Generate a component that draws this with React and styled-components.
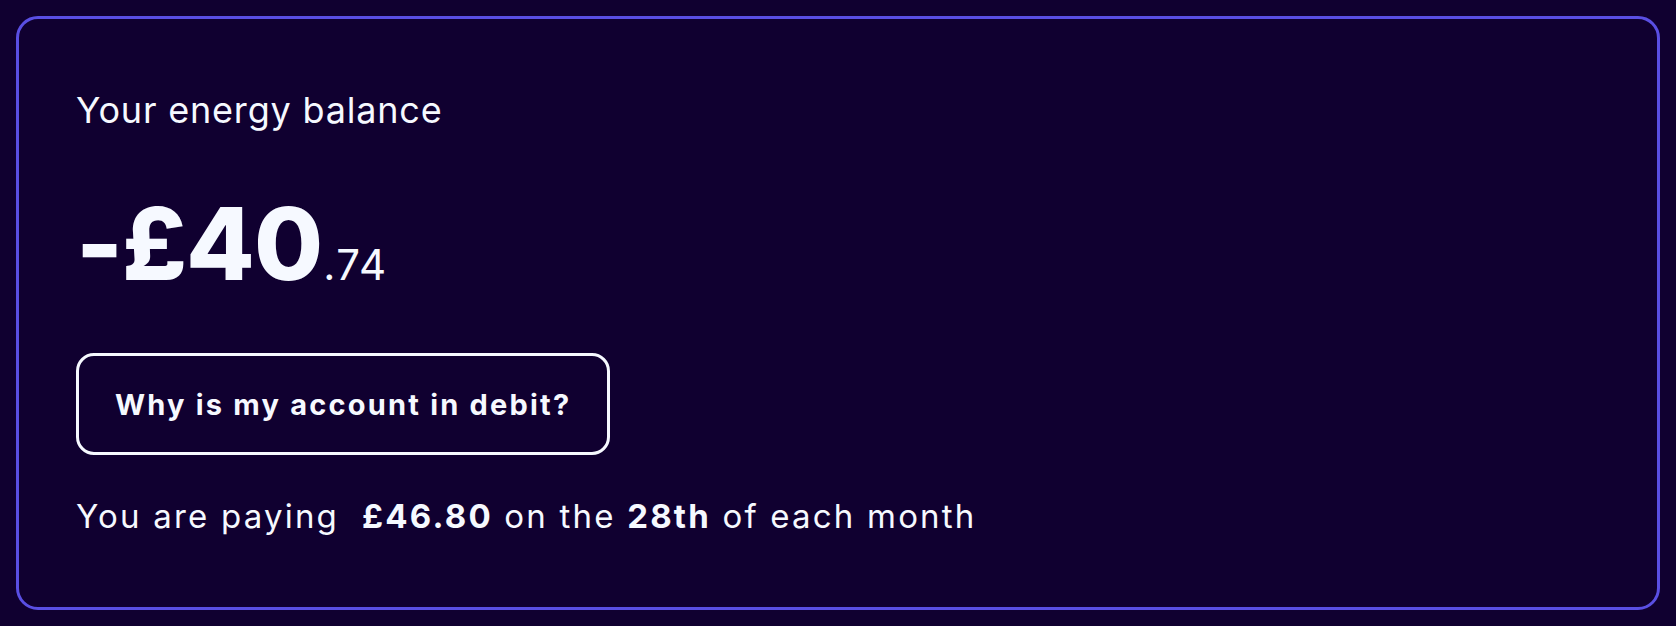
import React from "react";
import styled, { createGlobalStyle } from "styled-components";

const GlobalStyle = createGlobalStyle`
    html, body {
        margin: 0;
        padding: 0;
        background: #100030;
    }
    body {
        font-family: Inter, "Noto Sans", sans-serif;
        color: #f6f9ff;
    }
    * {
        box-sizing: border-box;
    }
`;

const Page = styled.div`
    height: 100vh;
    padding: 16px;
    display: flex;
`;

const BalanceCard = styled.section`
    flex: 1;
    border: 3px solid #5a4fe3;
    border-radius: 22px;
    padding: 69px 57px 0;
    display: flex;
    flex-direction: column;
    align-items: flex-start;
`;

const Label = styled.h2`
    margin: 0;
    font-size: 36px;
    line-height: 44px;
    font-weight: 400;
    letter-spacing: 0.8px;
`;

const Amount = styled.div`
    margin-top: 62px;
    font-size: 100px;
    line-height: 100px;
    font-weight: 800;
    letter-spacing: -1px;
`;

const Pence = styled.span`
    margin-left: 1px;
    font-size: 42px;
    line-height: 1;
    font-weight: 400;
    letter-spacing: 1.5px;
`;

const OutlineButton = styled.button`
    margin-top: 59px;
    height: 102px;
    padding: 0 36px;
    display: flex;
    align-items: center;
    background: transparent;
    border: 3px solid #f6f9ff;
    border-radius: 18px;
    color: #f6f9ff;
    font-family: inherit;
    font-size: 29px;
    font-weight: 700;
    letter-spacing: 2.2px;
    cursor: pointer;
`;

const PaymentNote = styled.p`
    margin: 41px 0 0;
    font-size: 33px;
    line-height: 40px;
    font-weight: 400;
    letter-spacing: 2.2px;
    white-space: pre;

    strong {
        font-weight: 700;
    }
`;

const App = () => (
    <>
        <GlobalStyle />
        <Page>
            <BalanceCard>
                <Label>Your energy balance</Label>
                <Amount>
                    -£40<Pence>.74</Pence>
                </Amount>
                <OutlineButton>Why is my account in debit?</OutlineButton>
                <PaymentNote>
                    You are paying  <strong>£46.80</strong> on the{" "}
                    <strong>28th</strong> of each month
                </PaymentNote>
            </BalanceCard>
        </Page>
    </>
);

export default App;
